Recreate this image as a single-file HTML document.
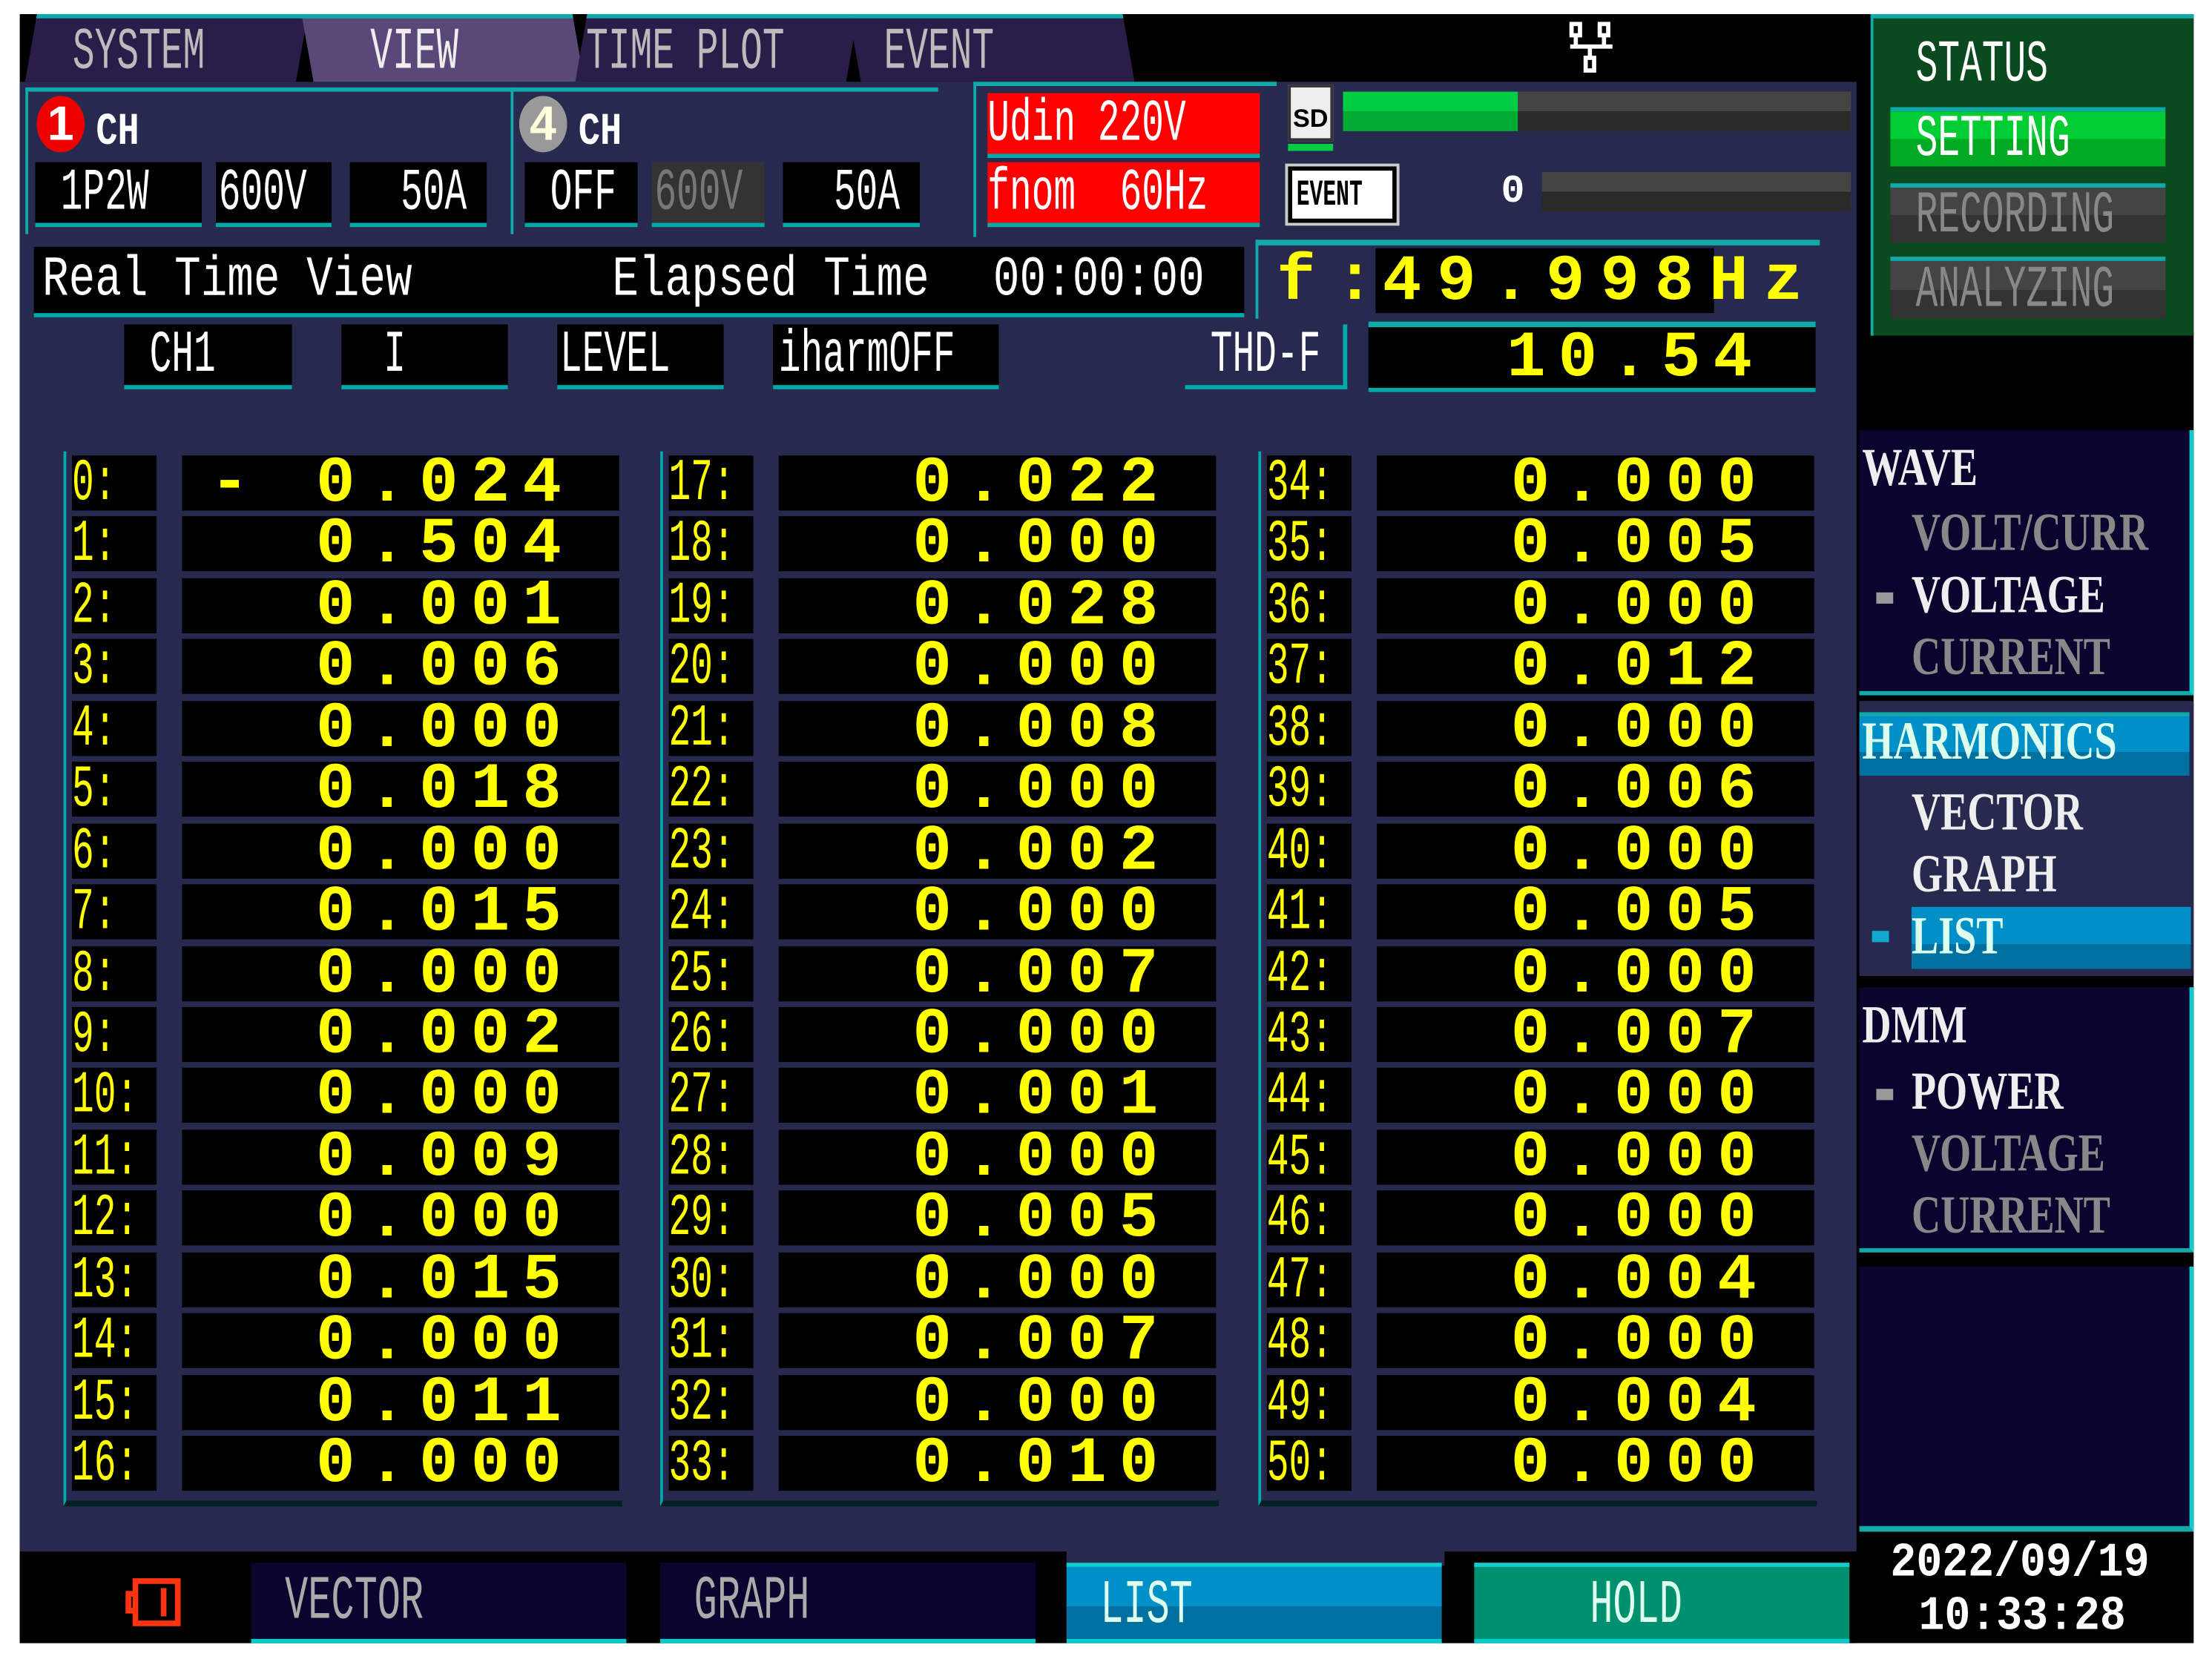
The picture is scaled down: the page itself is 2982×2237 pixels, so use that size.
<!DOCTYPE html>
<html><head><meta charset="utf-8"><style>
*{margin:0;padding:0;box-sizing:border-box}
html,body{width:2982px;height:2236px;background:#fff;overflow:hidden}
#w{position:absolute;left:0;top:0;width:1568px;height:1176px;transform:scale(1.9018);transform-origin:0 0;font-family:"Liberation Mono",monospace;color:#fff}
.a{position:absolute}
.t{display:inline-block;transform:scaleX(.62);transform-origin:0 50%;white-space:pre}
.bx{position:absolute;background:#000;border-bottom:3px solid #0aa;height:46px;font-size:42px;line-height:44px;overflow:hidden}
.tab{position:absolute;top:10px;height:48px;font-size:42px;line-height:48px;color:#bbb;background:#2a1d4a;border-top:3px solid #1aa}
.tab span{display:inline-block;transform-origin:0 50%;white-space:pre}
.col{position:absolute;top:320px;width:396px;height:748px;border-left:2px solid #0aa;border-bottom:4px solid #022}
.r{position:absolute;left:2px;width:392px;height:39px}
.l{position:absolute;left:2px;width:60px;height:39px;background:#000;color:#ff0;font-size:42px;line-height:40px;overflow:hidden}
.v{position:absolute;left:80px;width:310px;height:39px;background:#000;color:#ff0;font:bold 46px/40px "Liberation Mono",monospace;letter-spacing:9px;text-align:right;padding-right:32px}
.side{position:absolute;left:1318px;width:237px;background:#09052e;border-right:3px solid #1cc}
.mi{position:absolute;font:bold 38px/40px "Liberation Serif",serif;color:#eee}
.g{color:#888}
.sq{position:absolute;width:12px;height:8px;background:#999}
.btn{position:absolute;top:1108px;height:57px;width:266px;font-size:44px;line-height:57px;border-bottom:3px solid #0cc}
</style></head><body><div id="w">
<div class="a" style="left:14px;top:10px;width:1541px;height:1155px;background:#000"></div>
<div class="a" style="left:14px;top:58px;width:1302px;height:1042px;background:#272a4e"></div>
<div class="tab" style="left:22px;width:192px;transform:skewX(-10deg)"><span style="margin-left:30px;transform:skewX(10deg) scaleX(.62)">SYSTEM</span></div>
<div class="tab" style="left:218px;width:192px;background:#5a4878;color:#eee;transform:skewX(10deg)"><span style="margin-left:44px;transform:skewX(-10deg) scaleX(.62)">VIEW</span></div>
<div class="tab" style="left:412px;width:192px;transform:skewX(-10deg)"><span style="margin-left:4px;transform:skewX(10deg) scaleX(.62)">TIME PLOT</span></div>
<div class="tab" style="left:606px;width:194px;transform:skewX(10deg)"><span style="margin-left:20px;transform:skewX(-10deg) scaleX(.62)">EVENT</span></div>
<svg class="a" style="left:1110px;top:14px" width="40" height="40" viewBox="0 0 40 40" fill="none" stroke="#fff" stroke-width="3"><rect x="4" y="3" width="6" height="8"/><rect x="24" y="3" width="6" height="8"/><path d="M7 11v8M27 11v8M3 19h30M17 19v8"/><rect x="14" y="27" width="6" height="9"/></svg>
<!-- CH1 -->
<div class="a" style="left:18px;top:62px;width:345px;height:104px;border-top:3px solid #1aa;border-left:2px solid #1aa"></div>
<div class="a" style="left:26px;top:68px;width:34px;height:40px;border-radius:50%;background:#e00;font:bold 34px/40px 'Liberation Sans',sans-serif;text-align:center">1</div>
<div class="a" style="left:68px;top:76px;font:bold 32px/36px 'Liberation Mono',monospace"><span class="t" style="transform:scaleX(.8)">CH</span></div>
<div class="bx" style="left:25px;top:115px;width:118px"><span class="t" style="margin-left:18px">1P2W</span></div>
<div class="bx" style="left:153px;top:115px;width:82px"><span class="t" style="margin-left:2px">600V</span></div>
<div class="bx" style="left:248px;top:115px;width:97px"><span class="t" style="margin-left:36px">50A</span></div>
<!-- CH4 -->
<div class="a" style="left:362px;top:62px;width:303px;height:104px;border-top:3px solid #1aa;border-left:2px solid #1aa"></div>
<div class="a" style="left:368px;top:68px;width:34px;height:40px;border-radius:50%;background:#999;font:bold 34px/40px 'Liberation Sans',sans-serif;text-align:center;color:#ffd">4</div>
<div class="a" style="left:410px;top:76px;font:bold 32px/36px 'Liberation Mono',monospace"><span class="t" style="transform:scaleX(.8)">CH</span></div>
<div class="bx" style="left:372px;top:115px;width:80px"><span class="t" style="margin-left:18px">OFF</span></div>
<div class="bx" style="left:462px;top:115px;width:80px;background:#333;color:#777"><span class="t" style="margin-left:2px">600V</span></div>
<div class="bx" style="left:555px;top:115px;width:97px"><span class="t" style="margin-left:36px">50A</span></div>
<!-- Udin -->
<div class="a" style="left:690px;top:58px;width:215px;height:110px;border-top:3px solid #1aa;border-left:2px solid #1aa"></div>
<div class="bx" style="left:700px;top:66px;width:193px;background:#f00"><span class="t">Udin 220V</span></div>
<div class="bx" style="left:700px;top:115px;width:193px;background:#f00"><span class="t">fnom  60Hz</span></div>
<div class="a" style="left:913px;top:60px;width:32px;height:40px;background:#eee;border:2px solid #333;color:#000;font:bold 18px/44px 'Liberation Sans',sans-serif;text-align:center">SD</div>
<div class="a" style="left:913px;top:102px;width:32px;height:5px;background:#0c4"></div>
<div class="a" style="left:952px;top:65px;width:124px;height:28px;background:linear-gradient(#0c4 50%,#0a3 50%)"></div>
<div class="a" style="left:1076px;top:65px;width:236px;height:28px;background:linear-gradient(#444 50%,#2a2a2a 50%)"></div>
<div class="a" style="left:913px;top:118px;width:77px;height:40px;background:#fff;border:3px solid #000;outline:2px solid #ccc;color:#000;font:bold 26px/34px 'Liberation Mono',monospace;overflow:hidden"><span class="t" style="transform:scaleX(.6);margin-left:3px">EVENT</span></div>
<div class="a" style="left:1064px;top:122px;font:bold 28px/30px 'Liberation Mono',monospace">0</div>
<div class="a" style="left:1093px;top:122px;width:219px;height:28px;background:linear-gradient(#444 50%,#2a2a2a 50%)"></div>
<!-- real time -->
<div class="bx" style="left:24px;top:175px;width:858px;height:50px;line-height:50px;font-size:40px">
<span class="t" style="position:absolute;left:6px;transform:scaleX(.78)">Real Time View</span>
<span class="t" style="position:absolute;left:410px;transform:scaleX(.78)">Elapsed Time</span>
<span class="t" style="position:absolute;left:680px;transform:scaleX(.78)">00:00:00</span></div>
<div class="a" style="left:890px;top:170px;width:400px;height:56px;border-top:4px solid #1aa;border-left:2px solid #1aa;background:#272a4e"></div>
<div class="a" style="left:905px;top:178px;font:bold 46px/44px 'Liberation Mono',monospace;color:#ff0">f<span style="margin-left:14px">:</span></div>
<div class="a" style="left:975px;top:176px;width:240px;height:46px;background:#000"></div>
<div class="a" style="left:980px;top:178px;font:bold 46px/44px 'Liberation Mono',monospace;color:#ff0;letter-spacing:11px">49.998Hz</div>
<div class="bx" style="left:88px;top:230px;width:119px"><span class="t" style="margin-left:18px">CH1</span></div>
<div class="bx" style="left:242px;top:230px;width:118px"><span class="t" style="margin-left:30px">I</span></div>
<div class="bx" style="left:395px;top:230px;width:118px"><span class="t" style="margin-left:2px">LEVEL</span></div>
<div class="bx" style="left:548px;top:230px;width:160px"><span class="t" style="margin-left:4px">iharmOFF</span></div>
<div class="bx" style="left:840px;top:230px;width:115px;background:#272a4e;border-right:3px solid #0aa"><span class="t" style="margin-left:18px">THD-F</span></div>
<div class="bx" style="left:970px;top:228px;width:317px;border-top:4px solid #1aa;height:50px"><span style="position:absolute;right:36px;top:0;font:bold 46px/44px 'Liberation Mono',monospace;color:#ff0;letter-spacing:9px">10.54</span></div>
<!-- table -->
<div class="col" style="left:45px">
<div class="r" style="top:3px"><div class="l"><span class="t">0:</span></div><div class="v"><span style="position:absolute;left:20px">-</span>0.024</div></div>
<div class="r" style="top:46px"><div class="l"><span class="t">1:</span></div><div class="v">0.504</div></div>
<div class="r" style="top:90px"><div class="l"><span class="t">2:</span></div><div class="v">0.001</div></div>
<div class="r" style="top:133px"><div class="l"><span class="t">3:</span></div><div class="v">0.006</div></div>
<div class="r" style="top:177px"><div class="l"><span class="t">4:</span></div><div class="v">0.000</div></div>
<div class="r" style="top:220px"><div class="l"><span class="t">5:</span></div><div class="v">0.018</div></div>
<div class="r" style="top:264px"><div class="l"><span class="t">6:</span></div><div class="v">0.000</div></div>
<div class="r" style="top:307px"><div class="l"><span class="t">7:</span></div><div class="v">0.015</div></div>
<div class="r" style="top:351px"><div class="l"><span class="t">8:</span></div><div class="v">0.000</div></div>
<div class="r" style="top:394px"><div class="l"><span class="t">9:</span></div><div class="v">0.002</div></div>
<div class="r" style="top:437px"><div class="l"><span class="t">10:</span></div><div class="v">0.000</div></div>
<div class="r" style="top:481px"><div class="l"><span class="t">11:</span></div><div class="v">0.009</div></div>
<div class="r" style="top:524px"><div class="l"><span class="t">12:</span></div><div class="v">0.000</div></div>
<div class="r" style="top:568px"><div class="l"><span class="t">13:</span></div><div class="v">0.015</div></div>
<div class="r" style="top:611px"><div class="l"><span class="t">14:</span></div><div class="v">0.000</div></div>
<div class="r" style="top:655px"><div class="l"><span class="t">15:</span></div><div class="v">0.011</div></div>
<div class="r" style="top:698px"><div class="l"><span class="t">16:</span></div><div class="v">0.000</div></div>
</div>
<div class="col" style="left:468px">
<div class="r" style="top:3px"><div class="l"><span class="t">17:</span></div><div class="v">0.022</div></div>
<div class="r" style="top:46px"><div class="l"><span class="t">18:</span></div><div class="v">0.000</div></div>
<div class="r" style="top:90px"><div class="l"><span class="t">19:</span></div><div class="v">0.028</div></div>
<div class="r" style="top:133px"><div class="l"><span class="t">20:</span></div><div class="v">0.000</div></div>
<div class="r" style="top:177px"><div class="l"><span class="t">21:</span></div><div class="v">0.008</div></div>
<div class="r" style="top:220px"><div class="l"><span class="t">22:</span></div><div class="v">0.000</div></div>
<div class="r" style="top:264px"><div class="l"><span class="t">23:</span></div><div class="v">0.002</div></div>
<div class="r" style="top:307px"><div class="l"><span class="t">24:</span></div><div class="v">0.000</div></div>
<div class="r" style="top:351px"><div class="l"><span class="t">25:</span></div><div class="v">0.007</div></div>
<div class="r" style="top:394px"><div class="l"><span class="t">26:</span></div><div class="v">0.000</div></div>
<div class="r" style="top:437px"><div class="l"><span class="t">27:</span></div><div class="v">0.001</div></div>
<div class="r" style="top:481px"><div class="l"><span class="t">28:</span></div><div class="v">0.000</div></div>
<div class="r" style="top:524px"><div class="l"><span class="t">29:</span></div><div class="v">0.005</div></div>
<div class="r" style="top:568px"><div class="l"><span class="t">30:</span></div><div class="v">0.000</div></div>
<div class="r" style="top:611px"><div class="l"><span class="t">31:</span></div><div class="v">0.007</div></div>
<div class="r" style="top:655px"><div class="l"><span class="t">32:</span></div><div class="v">0.000</div></div>
<div class="r" style="top:698px"><div class="l"><span class="t">33:</span></div><div class="v">0.010</div></div>
</div>
<div class="col" style="left:892px">
<div class="r" style="top:3px"><div class="l"><span class="t">34:</span></div><div class="v">0.000</div></div>
<div class="r" style="top:46px"><div class="l"><span class="t">35:</span></div><div class="v">0.005</div></div>
<div class="r" style="top:90px"><div class="l"><span class="t">36:</span></div><div class="v">0.000</div></div>
<div class="r" style="top:133px"><div class="l"><span class="t">37:</span></div><div class="v">0.012</div></div>
<div class="r" style="top:177px"><div class="l"><span class="t">38:</span></div><div class="v">0.000</div></div>
<div class="r" style="top:220px"><div class="l"><span class="t">39:</span></div><div class="v">0.006</div></div>
<div class="r" style="top:264px"><div class="l"><span class="t">40:</span></div><div class="v">0.000</div></div>
<div class="r" style="top:307px"><div class="l"><span class="t">41:</span></div><div class="v">0.005</div></div>
<div class="r" style="top:351px"><div class="l"><span class="t">42:</span></div><div class="v">0.000</div></div>
<div class="r" style="top:394px"><div class="l"><span class="t">43:</span></div><div class="v">0.007</div></div>
<div class="r" style="top:437px"><div class="l"><span class="t">44:</span></div><div class="v">0.000</div></div>
<div class="r" style="top:481px"><div class="l"><span class="t">45:</span></div><div class="v">0.000</div></div>
<div class="r" style="top:524px"><div class="l"><span class="t">46:</span></div><div class="v">0.000</div></div>
<div class="r" style="top:568px"><div class="l"><span class="t">47:</span></div><div class="v">0.004</div></div>
<div class="r" style="top:611px"><div class="l"><span class="t">48:</span></div><div class="v">0.000</div></div>
<div class="r" style="top:655px"><div class="l"><span class="t">49:</span></div><div class="v">0.004</div></div>
<div class="r" style="top:698px"><div class="l"><span class="t">50:</span></div><div class="v">0.000</div></div>
</div>
<!-- status -->
<div class="a" style="left:1326px;top:10px;width:229px;height:228px;background:#0a4a1e;border-top:3px solid #1aa;border-left:2px solid #1aa"></div>
<div class="a" style="left:1358px;top:22px;font-size:42px;line-height:48px"><span class="t">STATUS</span></div>
<div class="a" style="left:1340px;top:76px;width:195px;height:42px;background:linear-gradient(#0c3 50%,#0a2 50%);border-top:3px solid #1aa;font-size:42px;line-height:40px"><span class="t" style="margin-left:18px">SETTING</span></div>
<div class="a" style="left:1340px;top:130px;width:195px;height:42px;background:linear-gradient(#444 50%,#333 50%);border-top:3px solid #1aa;font-size:42px;line-height:40px;color:#888"><span class="t" style="margin-left:18px">RECORDING</span></div>
<div class="a" style="left:1340px;top:182px;width:195px;height:44px;background:linear-gradient(#444 50%,#333 50%);border-top:3px solid #1aa;font-size:42px;line-height:42px;color:#888"><span class="t" style="margin-left:18px">ANALYZING</span></div>
<!-- side menus -->
<div class="side" style="top:305px;height:188px;border-bottom:3px solid #1aa"></div>
<div class="mi" style="left:1320px;top:312px"><span class="t" style="transform:scaleX(.75)">WAVE</span></div>
<div class="mi g" style="left:1355px;top:358px"><span class="t" style="transform:scaleX(.75)">VOLT/CURR</span></div>
<div class="sq" style="left:1330px;top:420px"></div>
<div class="mi" style="left:1355px;top:402px"><span class="t" style="transform:scaleX(.75)">VOLTAGE</span></div>
<div class="mi g" style="left:1355px;top:446px"><span class="t" style="transform:scaleX(.75)">CURRENT</span></div>
<div class="a" style="left:1318px;top:497px;width:237px;height:195px;background:#272a4e"></div>
<div class="a" style="left:1318px;top:505px;width:234px;height:45px;background:linear-gradient(#0090c8 60%,#0070a0 60%);border-top:3px solid #1aa"></div>
<div class="mi" style="left:1320px;top:506px;color:#dfe"><span class="t" style="transform:scaleX(.75)">HARMONICS</span></div>
<div class="mi" style="left:1355px;top:556px"><span class="t" style="transform:scaleX(.75)">VECTOR</span></div>
<div class="mi" style="left:1355px;top:600px"><span class="t" style="transform:scaleX(.75)">GRAPH</span></div>
<div class="a" style="left:1355px;top:643px;width:198px;height:44px;background:linear-gradient(#0090c8 60%,#0070a0 60%)"></div>
<div class="sq" style="left:1327px;top:660px;background:#1ac"></div>
<div class="mi" style="left:1355px;top:644px;color:#dfe"><span class="t" style="transform:scaleX(.75)">LIST</span></div>
<div class="side" style="top:700px;height:188px;border-bottom:3px solid #1aa"></div>
<div class="mi" style="left:1320px;top:707px"><span class="t" style="transform:scaleX(.75)">DMM</span></div>
<div class="sq" style="left:1330px;top:772px"></div>
<div class="mi" style="left:1355px;top:754px"><span class="t" style="transform:scaleX(.75)">POWER</span></div>
<div class="mi g" style="left:1355px;top:798px"><span class="t" style="transform:scaleX(.75)">VOLTAGE</span></div>
<div class="mi g" style="left:1355px;top:842px"><span class="t" style="transform:scaleX(.75)">CURRENT</span></div>
<div class="side" style="top:898px;height:188px;border-bottom:4px solid #1aa"></div>
<!-- bottom -->
<div class="a" style="left:14px;top:1100px;width:1302px;height:65px;background:#000"></div>
<div class="a" style="left:756px;top:1100px;width:268px;height:10px;background:#272a4e"></div>
<svg class="a" style="left:88px;top:1118px" width="42" height="36" viewBox="0 0 42 36" fill="none" stroke="#f31" stroke-width="4"><rect x="8" y="3" width="30" height="30"/><path d="M8 12H3v12h5M28 8v20"/></svg>
<div class="btn" style="left:178px;background:#09052e;color:#aaa"><span class="t" style="margin-left:24px">VECTOR</span></div>
<div class="btn" style="left:468px;background:#09052e;color:#aaa"><span class="t" style="margin-left:24px">GRAPH</span></div>
<div class="btn" style="left:756px;background:linear-gradient(#0090c8 55%,#0070a0 55%);border-top:3px solid #1cc;color:#dfe"><span class="t" style="margin-left:24px">LIST</span></div>
<div class="btn" style="left:1045px;background:#009070;border-top:3px solid #1cc;color:#dfe"><span class="t" style="margin-left:82px">HOLD</span></div>
<div class="a" style="left:1340px;top:1090px;font:bold 34px/38px 'Liberation Mono',monospace"><span class="t" style="transform:scaleX(.9)">2022/09/19</span></div>
<div class="a" style="left:1360px;top:1128px;font:bold 34px/38px 'Liberation Mono',monospace"><span class="t" style="transform:scaleX(.9)">10:33:28</span></div>
</div></body></html>
